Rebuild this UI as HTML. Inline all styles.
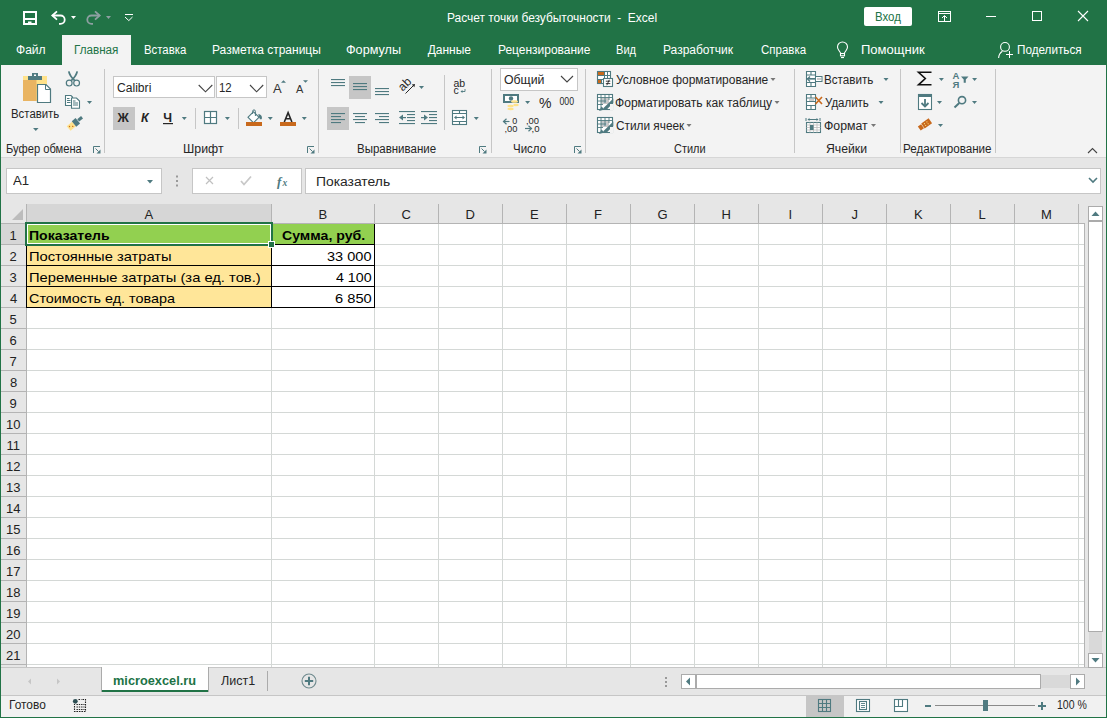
<!DOCTYPE html><html><head><meta charset='utf-8'><style>
html,body{margin:0;padding:0;}
body{width:1107px;height:718px;position:relative;overflow:hidden;background:#e6e6e6;font-family:"Liberation Sans",sans-serif;}
body>div,body>svg{position:absolute;}
.t{white-space:pre;transform-origin:0 0;font-family:"Liberation Sans",sans-serif;}
</style></head><body>
<div style='left:0px;top:0px;width:1107px;height:65px;background:#217346'></div><div style='left:1px;top:65px;width:1105px;height:92px;background:#f3f3f3'></div><div style='left:1px;top:157px;width:1105px;height:1px;background:#d6d6d6'></div><div style='left:1px;top:158px;width:1105px;height:509px;background:#e6e6e6'></div><div style='left:1px;top:667px;width:1105px;height:1px;background:#c6c6c6'></div><div style='left:1px;top:668px;width:1105px;height:27px;background:#e6e6e6'></div><div style='left:1px;top:695px;width:1105px;height:1px;background:#c6c6c6'></div><div style='left:1px;top:696px;width:1105px;height:21px;background:#f1f1f1'></div><div style='left:0px;top:0px;width:1px;height:718px;background:#217346'></div><div style='left:1106px;top:0px;width:1px;height:718px;background:#217346'></div><div style='left:0px;top:717px;width:1107px;height:1px;background:#217346'></div><div style='left:864px;top:7px;width:48px;height:19px;background:#fff;border-radius:2px'></div><div style='left:62px;top:35px;width:69px;height:30px;background:#f3f3f3'></div><div style='left:104px;top:69px;width:1px;height:84px;background:#c6c6c6'></div><div style='left:318px;top:69px;width:1px;height:84px;background:#c6c6c6'></div><div style='left:491px;top:69px;width:1px;height:84px;background:#c6c6c6'></div><div style='left:585px;top:69px;width:1px;height:84px;background:#c6c6c6'></div><div style='left:794px;top:69px;width:1px;height:84px;background:#c6c6c6'></div><div style='left:900px;top:69px;width:1px;height:84px;background:#c6c6c6'></div><div style='left:995px;top:69px;width:1px;height:84px;background:#c6c6c6'></div><div style='left:113px;top:76px;width:102px;height:22px;background:#fff;border:1px solid #c6c6c6;box-sizing:border-box'></div><div style='left:216px;top:76px;width:51px;height:22px;background:#fff;border:1px solid #c6c6c6;box-sizing:border-box'></div><div style='left:113px;top:107px;width:22px;height:23px;background:#c6c6c6'></div><div style='left:349px;top:76px;width:22px;height:23px;background:#c6c6c6'></div><div style='left:327px;top:107px;width:22px;height:23px;background:#c6c6c6'></div><div style='left:444px;top:75px;width:1px;height:55px;background:#c6c6c6'></div><div style='left:195px;top:108px;width:1px;height:21px;background:#c6c6c6'></div><div style='left:238px;top:108px;width:1px;height:21px;background:#c6c6c6'></div><div style='left:500px;top:68px;width:78px;height:23px;background:#fff;border:1px solid #c6c6c6;box-sizing:border-box'></div><div style='left:6px;top:168px;width:156px;height:26px;background:#fff;border:1px solid #c6c6c6;box-sizing:border-box'></div><div style='left:192px;top:168px;width:110px;height:26px;background:#fff;border:1px solid #c6c6c6;box-sizing:border-box'></div><div style='left:305px;top:168px;width:796px;height:26px;background:#fff;border:1px solid #c6c6c6;box-sizing:border-box'></div><div style='left:27px;top:224px;width:1057px;height:443px;background:#fff'></div><div style='left:27px;top:204px;width:244px;height:19px;background:#d6d6d6'></div><div style='left:1px;top:224px;width:25px;height:20px;background:#d6d6d6'></div><div style='left:271px;top:224px;width:1px;height:443px;background:#d4d8d6'></div><div style='left:271px;top:204px;width:1px;height:19px;background:#b4b4b4'></div><div style='left:374px;top:224px;width:1px;height:443px;background:#d4d8d6'></div><div style='left:374px;top:204px;width:1px;height:19px;background:#b4b4b4'></div><div style='left:438px;top:224px;width:1px;height:443px;background:#d4d8d6'></div><div style='left:438px;top:204px;width:1px;height:19px;background:#b4b4b4'></div><div style='left:502px;top:224px;width:1px;height:443px;background:#d4d8d6'></div><div style='left:502px;top:204px;width:1px;height:19px;background:#b4b4b4'></div><div style='left:566px;top:224px;width:1px;height:443px;background:#d4d8d6'></div><div style='left:566px;top:204px;width:1px;height:19px;background:#b4b4b4'></div><div style='left:630px;top:224px;width:1px;height:443px;background:#d4d8d6'></div><div style='left:630px;top:204px;width:1px;height:19px;background:#b4b4b4'></div><div style='left:694px;top:224px;width:1px;height:443px;background:#d4d8d6'></div><div style='left:694px;top:204px;width:1px;height:19px;background:#b4b4b4'></div><div style='left:758px;top:224px;width:1px;height:443px;background:#d4d8d6'></div><div style='left:758px;top:204px;width:1px;height:19px;background:#b4b4b4'></div><div style='left:822px;top:224px;width:1px;height:443px;background:#d4d8d6'></div><div style='left:822px;top:204px;width:1px;height:19px;background:#b4b4b4'></div><div style='left:886px;top:224px;width:1px;height:443px;background:#d4d8d6'></div><div style='left:886px;top:204px;width:1px;height:19px;background:#b4b4b4'></div><div style='left:950px;top:224px;width:1px;height:443px;background:#d4d8d6'></div><div style='left:950px;top:204px;width:1px;height:19px;background:#b4b4b4'></div><div style='left:1014px;top:224px;width:1px;height:443px;background:#d4d8d6'></div><div style='left:1014px;top:204px;width:1px;height:19px;background:#b4b4b4'></div><div style='left:1078px;top:224px;width:1px;height:443px;background:#d4d8d6'></div><div style='left:1078px;top:204px;width:1px;height:19px;background:#b4b4b4'></div><div style='left:26px;top:204px;width:1px;height:463px;background:#b4b4b4'></div><div style='left:1px;top:223px;width:1083px;height:1px;background:#b4b4b4'></div><div style='left:27px;top:244px;width:1057px;height:1px;background:#d4d8d6'></div><div style='left:1px;top:244px;width:25px;height:1px;background:#b4b4b4'></div><div style='left:27px;top:265px;width:1057px;height:1px;background:#d4d8d6'></div><div style='left:1px;top:265px;width:25px;height:1px;background:#b4b4b4'></div><div style='left:27px;top:286px;width:1057px;height:1px;background:#d4d8d6'></div><div style='left:1px;top:286px;width:25px;height:1px;background:#b4b4b4'></div><div style='left:27px;top:307px;width:1057px;height:1px;background:#d4d8d6'></div><div style='left:1px;top:307px;width:25px;height:1px;background:#b4b4b4'></div><div style='left:27px;top:328px;width:1057px;height:1px;background:#d4d8d6'></div><div style='left:1px;top:328px;width:25px;height:1px;background:#b4b4b4'></div><div style='left:27px;top:349px;width:1057px;height:1px;background:#d4d8d6'></div><div style='left:1px;top:349px;width:25px;height:1px;background:#b4b4b4'></div><div style='left:27px;top:370px;width:1057px;height:1px;background:#d4d8d6'></div><div style='left:1px;top:370px;width:25px;height:1px;background:#b4b4b4'></div><div style='left:27px;top:391px;width:1057px;height:1px;background:#d4d8d6'></div><div style='left:1px;top:391px;width:25px;height:1px;background:#b4b4b4'></div><div style='left:27px;top:412px;width:1057px;height:1px;background:#d4d8d6'></div><div style='left:1px;top:412px;width:25px;height:1px;background:#b4b4b4'></div><div style='left:27px;top:433px;width:1057px;height:1px;background:#d4d8d6'></div><div style='left:1px;top:433px;width:25px;height:1px;background:#b4b4b4'></div><div style='left:27px;top:454px;width:1057px;height:1px;background:#d4d8d6'></div><div style='left:1px;top:454px;width:25px;height:1px;background:#b4b4b4'></div><div style='left:27px;top:475px;width:1057px;height:1px;background:#d4d8d6'></div><div style='left:1px;top:475px;width:25px;height:1px;background:#b4b4b4'></div><div style='left:27px;top:496px;width:1057px;height:1px;background:#d4d8d6'></div><div style='left:1px;top:496px;width:25px;height:1px;background:#b4b4b4'></div><div style='left:27px;top:517px;width:1057px;height:1px;background:#d4d8d6'></div><div style='left:1px;top:517px;width:25px;height:1px;background:#b4b4b4'></div><div style='left:27px;top:538px;width:1057px;height:1px;background:#d4d8d6'></div><div style='left:1px;top:538px;width:25px;height:1px;background:#b4b4b4'></div><div style='left:27px;top:559px;width:1057px;height:1px;background:#d4d8d6'></div><div style='left:1px;top:559px;width:25px;height:1px;background:#b4b4b4'></div><div style='left:27px;top:580px;width:1057px;height:1px;background:#d4d8d6'></div><div style='left:1px;top:580px;width:25px;height:1px;background:#b4b4b4'></div><div style='left:27px;top:601px;width:1057px;height:1px;background:#d4d8d6'></div><div style='left:1px;top:601px;width:25px;height:1px;background:#b4b4b4'></div><div style='left:27px;top:622px;width:1057px;height:1px;background:#d4d8d6'></div><div style='left:1px;top:622px;width:25px;height:1px;background:#b4b4b4'></div><div style='left:27px;top:643px;width:1057px;height:1px;background:#d4d8d6'></div><div style='left:1px;top:643px;width:25px;height:1px;background:#b4b4b4'></div><div style='left:27px;top:664px;width:1057px;height:1px;background:#d4d8d6'></div><div style='left:1px;top:664px;width:25px;height:1px;background:#b4b4b4'></div><div style='left:1084px;top:223px;width:1px;height:444px;background:#b4b4b4'></div><div style='left:27px;top:224px;width:244px;height:20px;background:#92d050'></div><div style='left:272px;top:224px;width:102px;height:20px;background:#92d050'></div><div style='left:27px;top:245px;width:244px;height:20px;background:#ffe699'></div><div style='left:27px;top:266px;width:244px;height:20px;background:#ffe699'></div><div style='left:27px;top:287px;width:244px;height:20px;background:#ffe699'></div><div style='left:26px;top:244px;width:349px;height:1px;background:#000'></div><div style='left:26px;top:265px;width:349px;height:1px;background:#000'></div><div style='left:26px;top:286px;width:349px;height:1px;background:#000'></div><div style='left:26px;top:307px;width:349px;height:1px;background:#000'></div><div style='left:26px;top:244px;width:1px;height:64px;background:#000'></div><div style='left:271px;top:224px;width:1px;height:84px;background:#000'></div><div style='left:374px;top:224px;width:1px;height:84px;background:#000'></div><div style='left:25px;top:222px;width:248px;height:24px;border:2px solid #217346;box-sizing:border-box'></div><div style='left:27px;top:224px;width:244px;height:20px;border:1px solid #fff;box-sizing:border-box'></div><div style='left:268px;top:241px;width:7px;height:7px;background:#217346;border:1px solid #fff;box-sizing:border-box'></div><div style='left:1088px;top:206px;width:15px;height:15px;background:#fff;border:1px solid #ababab;box-sizing:border-box'></div><div style='left:1088px;top:221px;width:15px;height:411px;background:#fff;border:1px solid #ababab;box-sizing:border-box'></div><div style='left:1089px;top:632px;width:13px;height:21px;background:#d9d9d9'></div><div style='left:1088px;top:653px;width:15px;height:15px;background:#fff;border:1px solid #ababab;box-sizing:border-box'></div><div style='left:681px;top:674px;width:15px;height:15px;background:#fff;border:1px solid #ababab;box-sizing:border-box'></div><div style='left:696px;top:674px;width:345px;height:15px;background:#fff;border:1px solid #ababab;box-sizing:border-box'></div><div style='left:1041px;top:675px;width:29px;height:13px;background:#d9d9d9'></div><div style='left:1070px;top:674px;width:15px;height:15px;background:#fff;border:1px solid #ababab;box-sizing:border-box'></div><div style='left:101px;top:667px;width:108px;height:25px;background:#fff;border-left:1px solid #ababab;border-right:1px solid #ababab;box-sizing:border-box'></div><div style='left:102px;top:690px;width:106px;height:2px;background:#217346'></div><div style='left:267px;top:671px;width:1px;height:20px;background:#ababab'></div><div style='left:806px;top:696px;width:38px;height:21px;background:#c6c6c6'></div><div style='left:935px;top:705px;width:100px;height:1px;background:#8a8a8a'></div><div style='left:983px;top:700px;width:5px;height:11px;background:#4f7a80'></div><svg style='left:0;top:0' width='1107' height='718' viewBox='0 0 1107 718'><rect x='24' y='12' width='12' height='12' fill='none' stroke='#fff' stroke-width='2'/>
<rect x='23' y='18' width='14' height='2' fill='#fff'/>
<rect x='28' y='21.5' width='3.5' height='3' fill='#fff'/><path d='M52.5 15.5 H60.5 A4.2 4.2 0 0 1 60.5 23.9 H59' fill='none' stroke='#fff' stroke-width='1.8'/>
<polyline points='57,11.3 52.3,15.5 57,19.7' fill='none' stroke='#fff' stroke-width='1.8'/><polygon points='71.0,16 76.0,16 73.5,19' fill='#fff'/><path d='M99.5 15.5 H91.5 A4.2 4.2 0 0 0 91.5 23.9 H93' fill='none' stroke='#8ea0a2' stroke-width='1.8'/>
<polyline points='95,11.3 99.7,15.5 95,19.7' fill='none' stroke='#8ea0a2' stroke-width='1.8'/><polygon points='106.0,16 111.0,16 108.5,19' fill='#8ea0a2'/><rect x='125' y='14' width='8' height='1' fill='#fff'/>
<polyline points='125,17 128.8,20.6 132.5,17' fill='none' stroke='#fff' stroke-width='1'/><rect x='938.5' y='11.5' width='12' height='10' fill='none' stroke='#fff' stroke-width='1'/>
<rect x='938.5' y='13' width='12' height='1' fill='#fff'/>
<polyline points='942,18 944.5,15.5 947,18' fill='none' stroke='#fff' stroke-width='1'/><rect x='944' y='16' width='1' height='5' fill='#fff'/><rect x='986' y='16' width='10' height='1' fill='#fff'/>
<rect x='1032.5' y='11.5' width='9' height='9' fill='none' stroke='#fff' stroke-width='1'/>
<path d='M1078 11 L1088 21 M1088 11 L1078 21' stroke='#fff' stroke-width='1.1'/><path d='M840.6 53 L838.6 50 C837.8 48.8 837.5 47.8 837.5 47 A5 5 0 0 1 847.5 47 C847.5 47.8 847.2 48.8 846.4 50 L844.4 53' fill='none' stroke='#fff' stroke-width='1.1'/>
<rect x='840.5' y='53.5' width='4' height='2.3' fill='none' stroke='#fff' stroke-width='1.1'/>
<rect x='841' y='57' width='3' height='1.1' fill='#fff'/><circle cx='1005' cy='46.9' r='4.4' fill='none' stroke='#fff' stroke-width='1.1'/>
<path d='M998.6 58 C998.8 55.2 1000 52.8 1002.4 51.3' fill='none' stroke='#fff' stroke-width='1.1'/>
<path d='M1009.5 51 V58 M1006 54.5 H1013' stroke='#fff' stroke-width='1'/><rect x='23' y='76' width='24' height='25' fill='#ffe28a'/>
<rect x='23' y='80' width='13.5' height='21' fill='#e9b462'/>
<rect x='28' y='76' width='14' height='4' fill='#4f7a80'/>
<rect x='32' y='73' width='6' height='4' fill='#4f7a80'/><rect x='34' y='74.5' width='2' height='1.5' fill='#fff'/>
<path d='M37.5 84.5 H46 L50.5 89 V102.5 H37.5 Z' fill='#fff' stroke='#4f7a80' stroke-width='1.2'/>
<path d='M45.5 84.5 V89.5 H50.5' fill='none' stroke='#4f7a80' stroke-width='1'/><polygon points='33.05,128 38.55,128 35.8,131' fill='#4f7a80'/><path d='M68.8 71.3 C69.5 75 72 78 74.8 80.6 M77.2 71.3 C76.5 75 74 78 71.2 80.6' fill='none' stroke='#4f7a80' stroke-width='1.8'/>
<circle cx='69.2' cy='83.1' r='2.9' fill='none' stroke='#4f7a80' stroke-width='1.2'/>
<circle cx='76.6' cy='83.1' r='2.9' fill='none' stroke='#4f7a80' stroke-width='1.2'/><path d='M65.5 95.5 H71 L72.5 97 V105.5 H65.5 Z' fill='#fff' stroke='#4f7a80' stroke-width='1.1'/>
<rect x='67' y='98' width='2.5' height='1' fill='#4f7a80'/><rect x='67' y='100' width='3.5' height='1' fill='#4f7a80'/><rect x='67' y='102' width='3.5' height='1' fill='#4f7a80'/>
<path d='M71.5 98 H76.5 L79.5 101 V108.3 H71.5 Z' fill='#fff' stroke='#4f7a80' stroke-width='1.1'/>
<rect x='73' y='100.5' width='2.5' height='1' fill='#4f7a80'/><rect x='73' y='102.5' width='5' height='1' fill='#4f7a80'/><rect x='73' y='104.5' width='5' height='1' fill='#4f7a80'/><polygon points='87.0,101 92.0,101 89.5,104' fill='#4f7a80'/><g transform='rotate(-40 74 124)'>
<rect x='67' y='121' width='7' height='6' fill='#ffe28a'/><circle cx='69' cy='123' r='.7' fill='#c8691c'/><circle cx='71.5' cy='125' r='.7' fill='#c8691c'/>
<rect x='74' y='120.5' width='5' height='7' fill='#4f7a80'/><rect x='79.5' y='122.5' width='5' height='3' fill='#4f7a80'/></g><path d='M93.5 153 V146.5 H100' fill='none' stroke='#4f7a80' stroke-width='1'/>
<path d='M95.5 148.5 L98.5 151.5' stroke='#4f7a80' stroke-width='1'/>
<polygon points='100.5,153.5 100.5,149.5 96.5,153.5' fill='#4f7a80'/><path d='M307.5 153 V146.5 H314' fill='none' stroke='#4f7a80' stroke-width='1'/>
<path d='M309.5 148.5 L312.5 151.5' stroke='#4f7a80' stroke-width='1'/>
<polygon points='314.5,153.5 314.5,149.5 310.5,153.5' fill='#4f7a80'/><path d='M479.5 153 V146.5 H486' fill='none' stroke='#4f7a80' stroke-width='1'/>
<path d='M481.5 148.5 L484.5 151.5' stroke='#4f7a80' stroke-width='1'/>
<polygon points='486.5,153.5 486.5,149.5 482.5,153.5' fill='#4f7a80'/><path d='M574.5 153 V146.5 H581' fill='none' stroke='#4f7a80' stroke-width='1'/>
<path d='M576.5 148.5 L579.5 151.5' stroke='#4f7a80' stroke-width='1'/>
<polygon points='581.5,153.5 581.5,149.5 577.5,153.5' fill='#4f7a80'/><polyline points='198.7,85 205.5,91.8 212.3,85' fill='none' stroke='#444' stroke-width='1.1'/>
<polyline points='250,85 256.6,91.8 263.2,85' fill='none' stroke='#444' stroke-width='1.1'/><text x='273' y='92.6' font-family='Liberation Sans' font-size='13' fill='#333'>A</text>
<polygon points='281,82.8 283.5,80.3 286,82.8' fill='#4f7a80'/>
<text x='296' y='92.6' font-family='Liberation Sans' font-size='11' fill='#333'>A</text>
<polygon points='303,80.3 308,80.3 305.5,82.8' fill='#4f7a80'/><text x='117.5' y='121.8' font-family='Liberation Sans' font-size='12.5' font-weight='bold' fill='#262626'>Ж</text>
<text x='141' y='121.8' font-family='Liberation Sans' font-size='12.5' font-weight='bold' font-style='italic' fill='#262626'>К</text>
<text x='163.3' y='121.8' font-family='Liberation Sans' font-size='12.5' font-weight='bold' fill='#262626'>Ч</text>
<rect x='163' y='123' width='10' height='1.2' fill='#262626'/><polygon points='181.8,117 186.8,117 184.3,120' fill='#4f7a80'/><rect x='204.5' y='111.5' width='12' height='12' fill='#fff' stroke='#4f7a80' stroke-width='1.2'/>
<path d='M210.5 111.5 V123.5 M204.5 117.5 H216.5' stroke='#4f7a80' stroke-width='1.2'/><polygon points='224.9,117 229.9,117 227.4,120' fill='#4f7a80'/><g transform='rotate(45 253.5 117.3)'><rect x='249.6' y='113.4' width='7.8' height='7.8' fill='#fff' stroke='#4f7a80' stroke-width='1.1'/></g>
<path d='M252.6 114 V111.3 A1.4 1.4 0 0 1 255.4 111.3 V116' fill='none' stroke='#4f7a80' stroke-width='1'/>
<path d='M258.3 114 C261.5 114.5 262.5 117 261.6 119.3 L260 119.3 L258.8 116.5 Z' fill='#4f7a80'/>
<rect x='246' y='122' width='16' height='4' fill='#c8691c'/><polygon points='267.8,117 272.8,117 270.3,120' fill='#4f7a80'/><path d='M284.3 122 L288.1 112.6 L291.9 122 M285.6 118.8 H290.6' fill='none' stroke='#262626' stroke-width='1.6'/>
<rect x='280' y='122' width='16' height='4' fill='#c8691c'/><polygon points='301.8,117 306.8,117 304.3,120' fill='#4f7a80'/><rect x='331' y='79' width='14' height='1.1' fill='#4f7a80'/><rect x='331' y='82' width='14' height='1.1' fill='#4f7a80'/><rect x='331' y='85' width='14' height='1.1' fill='#4f7a80'/><rect x='353' y='83' width='14' height='1.1' fill='#4f7a80'/><rect x='353' y='86' width='14' height='1.1' fill='#4f7a80'/><rect x='353' y='89' width='14' height='1.1' fill='#4f7a80'/><rect x='375' y='88' width='14' height='1.1' fill='#4f7a80'/><rect x='375' y='91' width='14' height='1.1' fill='#4f7a80'/><rect x='375' y='94' width='14' height='1.1' fill='#4f7a80'/><rect x='331' y='113' width='14' height='1.1' fill='#4f7a80'/><rect x='331' y='116' width='10' height='1.1' fill='#4f7a80'/><rect x='331' y='119' width='14' height='1.1' fill='#4f7a80'/><rect x='331' y='122' width='10' height='1.1' fill='#4f7a80'/><rect x='353' y='113' width='14' height='1.1' fill='#4f7a80'/><rect x='355' y='116' width='10' height='1.1' fill='#4f7a80'/><rect x='353' y='119' width='14' height='1.1' fill='#4f7a80'/><rect x='355' y='122' width='10' height='1.1' fill='#4f7a80'/><rect x='375' y='113' width='14' height='1.1' fill='#4f7a80'/><rect x='379' y='116' width='10' height='1.1' fill='#4f7a80'/><rect x='375' y='119' width='14' height='1.1' fill='#4f7a80'/><rect x='379' y='122' width='10' height='1.1' fill='#4f7a80'/><rect x='399' y='111' width='16' height='1.1' fill='#4f7a80'/><rect x='407' y='114' width='8' height='1.1' fill='#4f7a80'/><rect x='407' y='117' width='8' height='1.1' fill='#4f7a80'/><rect x='407' y='120' width='8' height='1.1' fill='#4f7a80'/><rect x='399' y='123' width='16' height='1.1' fill='#4f7a80'/><polygon points='399,117.5 403,114.5 403,120.5' fill='#4f7a80'/><rect x='402' y='117' width='4' height='1.2' fill='#4f7a80'/><rect x='421' y='111' width='16' height='1.1' fill='#4f7a80'/><rect x='429' y='114' width='8' height='1.1' fill='#4f7a80'/><rect x='429' y='117' width='8' height='1.1' fill='#4f7a80'/><rect x='429' y='120' width='8' height='1.1' fill='#4f7a80'/><rect x='421' y='123' width='16' height='1.1' fill='#4f7a80'/><polygon points='428,117.5 424,114.5 424,120.5' fill='#4f7a80'/><rect x='421' y='117' width='4' height='1.2' fill='#4f7a80'/><text x='0' y='0' font-family='Liberation Sans' font-size='12' fill='#262626' transform='translate(402.8 91.8) rotate(-45)'>ab</text>
<path d='M405.5 93.5 L413.5 85.5' stroke='#262626' stroke-width='1'/><polygon points='415,84 411.8,84.6 414.4,87.2' fill='#262626'/><polygon points='419.0,86 424.0,86 421.5,89' fill='#4f7a80'/><text x='453.5' y='87' font-family='Liberation Sans' font-size='10.5' fill='#262626'>ab</text>
<text x='453.5' y='94.2' font-family='Liberation Sans' font-size='10.5' fill='#262626'>c</text>
<path d='M465 89 V91.5 H461.5' fill='none' stroke='#4f7a80' stroke-width='.9'/><polygon points='460.5,91.5 462.5,90 462.5,93' fill='#4f7a80'/><rect x='452.5' y='110.5' width='14' height='14' fill='#fff' stroke='#4f7a80' stroke-width='1.1'/>
<path d='M452.5 113.5 H466.5 M452.5 121.5 H466.5 M459.5 110.5 V113.5 M459.5 121.5 V124.5 M455 117.5 H464' stroke='#4f7a80' stroke-width='1.1'/>
<polygon points='454,117.5 456.5,115.5 456.5,119.5' fill='#4f7a80'/><polygon points='465,117.5 462.5,115.5 462.5,119.5' fill='#4f7a80'/><polygon points='473.8,117 478.8,117 476.3,120' fill='#4f7a80'/><polyline points='561,76 567,82 573,76' fill='none' stroke='#444' stroke-width='1.1'/><rect x='503' y='94' width='16' height='9' fill='#4f7a80'/><rect x='505' y='96' width='12' height='5' fill='#fff'/>
<circle cx='511' cy='98.5' r='2.2' fill='#4f7a80'/>
<ellipse cx='514.5' cy='101.5' rx='3.5' ry='1.3' fill='#ffe28a'/><ellipse cx='516' cy='105' rx='2.8' ry='1.2' fill='#ffe28a'/>
<ellipse cx='510.5' cy='106' rx='3.2' ry='1.3' fill='#ffe28a'/><ellipse cx='510.5' cy='109' rx='3.2' ry='1.2' fill='#ffe28a'/><polygon points='525.1,101 530.1,101 527.6,104' fill='#4f7a80'/><text x='539' y='107.6' font-family='Liberation Sans' font-size='14' fill='#262626'>%</text>
<text x='559.5' y='105.2' font-family='Liberation Sans' font-size='10' fill='#262626' textLength='14.5' lengthAdjust='spacingAndGlyphs'>000</text><path d='M503.5 121.5 H509.5' stroke='#4f7a80' stroke-width='1.2'/><polyline points='506.5,118.8 503.5,121.5 506.5,124.2' fill='none' stroke='#4f7a80' stroke-width='1.2'/>
<text x='512.3' y='124.2' font-family='Liberation Sans' font-size='9' fill='#262626' textLength='5' lengthAdjust='spacingAndGlyphs'>0</text>
<text x='504.5' y='132.2' font-family='Liberation Sans' font-size='9' fill='#262626' textLength='13' lengthAdjust='spacingAndGlyphs'>,00</text>
<text x='526' y='124.2' font-family='Liberation Sans' font-size='9' fill='#262626' textLength='13' lengthAdjust='spacingAndGlyphs'>,00</text>
<path d='M525 128.5 H531.5' stroke='#4f7a80' stroke-width='1.2'/><polyline points='528.5,125.8 531.5,128.5 528.5,131.2' fill='none' stroke='#4f7a80' stroke-width='1.2'/>
<text x='531.5' y='132.2' font-family='Liberation Sans' font-size='9' fill='#262626' textLength='8' lengthAdjust='spacingAndGlyphs'>,0</text><rect x='597.5' y='71.5' width='13' height='12' fill='#fff' stroke='#4f7a80' stroke-width='1.1'/>
<rect x='598' y='72' width='6.5' height='3.5' fill='#c8691c'/><rect x='598' y='80' width='3.5' height='3' fill='#c8691c'/>
<path d='M597.5 75.5 H610.5 M597.5 79.5 H603 M601.5 79.5 V83.5 M604.5 71.5 V78 M607.5 71.5 V78' stroke='#4f7a80' stroke-width='1'/>
<rect x='603.5' y='78.5' width='9' height='8' fill='#fff' stroke='#4f7a80' stroke-width='1.1'/>
<path d='M605.8 81.2 H610.3 M605.8 83.6 H610.3 M609.3 79.8 L606.8 85.2' stroke='#262626' stroke-width='.9'/><rect x='597.5' y='94.5' width='15' height='15' fill='#fff' stroke='#4f7a80' stroke-width='1.1'/>
<rect x='601' y='98' width='8' height='6' fill='#c8c8c8'/>
<circle cx='603' cy='100' r='.6' fill='#9cd0e8'/><circle cx='606' cy='101' r='.6' fill='#9cd0e8'/><circle cx='604' cy='102.5' r='.6' fill='#9cd0e8'/>
<path d='M597.5 97.5 H612.5 M597.5 101 H606 M597.5 104.5 H603 M601 94.5 V109.5 M605 94.5 V103 M609 94.5 V100' stroke='#4f7a80' stroke-width='.9'/>
<polygon points='613.3,98.5 613.3,103 606.5,109.8 603.5,109.8 603.5,108' fill='#4f7a80'/>
<polygon points='601.5,106.5 604.5,109.5 599,111' fill='#4f7a80'/>
<rect x='610' y='104' width='3' height='6' fill='#f3f3f3'/><rect x='597.5' y='117.5' width='15' height='15' fill='#fff' stroke='#4f7a80' stroke-width='1.1'/>
<rect x='601' y='121' width='8' height='6' fill='#c8c8c8'/>
<circle cx='603' cy='123' r='.6' fill='#9cd0e8'/><circle cx='606' cy='124' r='.6' fill='#9cd0e8'/><circle cx='604' cy='125.5' r='.6' fill='#9cd0e8'/>
<path d='M597.5 120.5 H612.5 M597.5 124 H606 M597.5 127.5 H603 M601 117.5 V132.5 M605 117.5 V126 M609 117.5 V123' stroke='#4f7a80' stroke-width='.9'/>
<polygon points='613.3,121.5 613.3,126 606.5,132.8 603.5,132.8 603.5,131' fill='#4f7a80'/>
<polygon points='601.5,129.5 604.5,132.5 599,134' fill='#4f7a80'/>
<rect x='610' y='127' width='3' height='6' fill='#f3f3f3'/><polygon points='774.5,101 779.5,101 777,104' fill='#777'/><polygon points='686.5,124 691.5,124 689,127' fill='#777'/><polygon points='770.5,78 775.5,78 773,81' fill='#777'/><path d='M806.5 71.5 H815.5 V86.5 H806.5 Z M806.5 75 H815.5 M806.5 78.5 H815.5 M806.5 82.5 H815.5 M811 82.5 V86.5 M811 71.5 V75' fill='#fff' stroke='#4f7a80' stroke-width='1.1'/>
<rect x='815.5' y='76.5' width='6.5' height='5' fill='#fff' stroke='#4f7a80' stroke-width='1'/><rect x='817' y='78' width='4' height='2' fill='#ccc'/>
<path d='M808 79 H815' stroke='#4f7a80' stroke-width='1.3'/><polyline points='810,76.5 807.5,79 810,81.5' fill='none' stroke='#4f7a80' stroke-width='1.3'/><polygon points='883.5,78 888.5,78 886,81' fill='#4f7a80'/><path d='M806.5 94.5 H815.5 V109.5 H806.5 Z M806.5 98 H815.5 M806.5 101.5 H815.5 M806.5 105.5 H815.5 M811 105.5 V109.5 M811 94.5 V98' fill='#fff' stroke='#4f7a80' stroke-width='1.1'/>
<rect x='809' y='99' width='5' height='2' fill='#ccc'/>
<path d='M815.5 97 L822 104 M822 97 L815.5 104' stroke='#c8691c' stroke-width='1.6'/><polygon points='878.5,101 883.5,101 881,104' fill='#4f7a80'/><path d='M806 118 V121 M820 118 V121 M808 119.5 H818' stroke='#4f7a80' stroke-width='1'/>
<polygon points='807.5,119.5 809.5,118 809.5,121' fill='#4f7a80'/><polygon points='818.5,119.5 816.5,118 816.5,121' fill='#4f7a80'/>
<rect x='806.5' y='122.5' width='14' height='10' fill='#fff' stroke='#4f7a80' stroke-width='1.1'/>
<path d='M806.5 125 H820.5 M806.5 127.5 H820.5 M806.5 130 H820.5 M810 122.5 V132.5 M813.5 122.5 V132.5 M817 122.5 V132.5' stroke='#bbb' stroke-width='.8'/>
<rect x='810' y='125' width='3.5' height='5' fill='#4f7a80'/><polygon points='871.0,124 876.0,124 873.5,127' fill='#777'/><path d='M931.5 72.3 H918.5 L925.3 78.5 L918.5 84.8 H931.5' fill='none' stroke='#111' stroke-width='1.6' stroke-linejoin='miter'/><polygon points='938.9,78 943.9,78 941.4,81' fill='#4f7a80'/><text x='952.5' y='78.5' font-family='Liberation Sans' font-size='9.5' font-weight='bold' fill='#4f7a80'>А</text>
<text x='952.5' y='87.5' font-family='Liberation Sans' font-size='9.5' font-weight='bold' fill='#4f7a80'>Я</text>
<path d='M961 76.5 H968.5 L965.8 79.5 V82.8 H963.7 V79.5 Z' fill='#4f7a80'/><polygon points='972.1,78 977.1,78 974.6,81' fill='#4f7a80'/><rect x='918.5' y='94.5' width='13' height='15' fill='#fff' stroke='#4f7a80' stroke-width='1.1'/>
<rect x='918' y='94' width='14' height='3' fill='#4f7a80'/>
<path d='M925 99 V106' stroke='#4f7a80' stroke-width='1.8'/><polyline points='921.5,103 925,106.5 928.5,103' fill='none' stroke='#4f7a80' stroke-width='1.8'/><polygon points='937.0,101 942.0,101 939.5,104' fill='#4f7a80'/><circle cx='962' cy='100.2' r='3.6' fill='none' stroke='#4f7a80' stroke-width='1.6'/>
<path d='M959.3 103 L954.5 107.5' stroke='#4f7a80' stroke-width='2'/><polygon points='972.0,101 977.0,101 974.5,104' fill='#4f7a80'/><g transform='rotate(-35 925 124.5)'><rect x='918' y='122' width='4' height='5' fill='#c8691c'/><rect x='922.5' y='121.5' width='9' height='6' fill='#c8691c'/>
<circle cx='925' cy='123.5' r='.6' fill='#ffe28a'/><circle cx='928' cy='123.5' r='.6' fill='#ffe28a'/><circle cx='925' cy='125.7' r='.6' fill='#ffe28a'/><circle cx='928' cy='125.7' r='.6' fill='#ffe28a'/></g><polygon points='938.0,124 943.0,124 940.5,127' fill='#4f7a80'/><polyline points='1088,153 1092.5,148.5 1097,153' fill='none' stroke='#444' stroke-width='1.1'/><polygon points='147.0,180 153.0,180 150,183.5' fill='#4f7a80'/>
<rect x='176' y='175.5' width='2' height='2' fill='#999'/><rect x='176' y='180' width='2' height='2' fill='#999'/><rect x='176' y='184.5' width='2' height='2' fill='#999'/>
<path d='M206 177 L213 184 M213 177 L206 184' stroke='#c0c0c0' stroke-width='1.2'/>
<polyline points='241,181 244,184.5 251,176.5' fill='none' stroke='#c8c8c8' stroke-width='1.8'/>
<text x='277' y='185.5' font-family='Liberation Serif' font-style='italic' font-weight='bold' font-size='13' fill='#4f7a80'>f</text>
<text x='282.5' y='185.5' font-family='Liberation Serif' font-style='italic' font-weight='bold' font-size='9.5' fill='#4f7a80'>x</text>
<polyline points='1089,178 1093,182 1097,178' fill='none' stroke='#4f7a80' stroke-width='1.6'/><polygon points='23,209 23,220 12,220' fill='#bcbcbc'/><polygon points='1091.5,216 1095.5,211.5 1099.5,216' fill='#4f7a80'/>
<polygon points='1091.5,658 1099.5,658 1095.5,662.5' fill='#4f7a80'/>
<polygon points='686,681.5 690,677.5 690,685.5' fill='#4f7a80'/>
<polygon points='1080,681.5 1076,677.5 1076,685.5' fill='#4f7a80'/>
<rect x='665' y='677' width='2' height='2' fill='#999'/><rect x='665' y='681' width='2' height='2' fill='#999'/><rect x='665' y='685' width='2' height='2' fill='#999'/><polygon points='28,681.5 31,678.5 31,684.5' fill='#c6c6c6'/><polygon points='60,681.5 57,678.5 57,684.5' fill='#c6c6c6'/><circle cx='309' cy='681' r='7' fill='none' stroke='#6f8a8e' stroke-width='1.1'/>
<path d='M309 676.8 V685.2 M304.8 681 H313.2' stroke='#4f7a80' stroke-width='2'/><circle cx='75.3' cy='701.3' r='2.4' fill='#2e4f54'/>
<path d='M78.5 699.5 H81.5 M82.5 699.5 H85.5 V711.5 H74.5 V704' fill='none' stroke='#222' stroke-width='1.1' stroke-dasharray='1.6 .9'/>
<path d='M76.5 704.5 H84.5 M76.5 707 H84.5 M76.5 709.5 H84.5' stroke='#222' stroke-width='1' stroke-dasharray='1.4 .9'/><rect x='818.5' y='699.5' width='12' height='12' fill='none' stroke='#4f7a80' stroke-width='1.1'/>
<path d='M822.5 699.5 V711.5 M826.5 699.5 V711.5 M818.5 703.5 H830.5 M818.5 707.5 H830.5' stroke='#4f7a80' stroke-width='1.1'/>
<rect x='856.5' y='699.5' width='13' height='12' fill='#fff' stroke='#4f7a80' stroke-width='1.1'/>
<rect x='859.5' y='701.5' width='7' height='8' fill='#fff' stroke='#4f7a80' stroke-width='1.1'/>
<path d='M861 703.5 H865 M861 705.5 H865 M861 707.5 H865' stroke='#4f7a80' stroke-width='.9'/>
<rect x='894.5' y='699.5' width='13' height='12' fill='#fff' stroke='#4f7a80' stroke-width='1.1'/>
<path d='M898.5 699.5 V706 M902.5 699.5 V706.5 H894.5' fill='none' stroke='#4f7a80' stroke-width='1.1'/>
<rect x='925' y='705' width='6' height='2' fill='#4f7a80'/>
<path d='M1038 706 H1046 M1042 702 V710' stroke='#4f7a80' stroke-width='2'/></svg><div class='t' style='left:446.61px;top:12.00px;font-size:12px;line-height:12px;font-weight:400;color:#fff;transform:scaleX(0.9948);'>Расчет точки безубыточности  -  Excel</div><div class='t' style='left:874.85px;top:11.00px;font-size:12px;line-height:12px;font-weight:400;color:#217346;transform:scaleX(0.9538);'>Вход</div><div class='t' style='left:15.50px;top:44.00px;font-size:12px;line-height:12px;font-weight:400;color:#fff;transform:scaleX(1.0036);'>Файл</div><div class='t' style='left:73.73px;top:44.00px;font-size:12px;line-height:12px;font-weight:400;color:#217346;transform:scaleX(0.9727);'>Главная</div><div class='t' style='left:144.05px;top:44.00px;font-size:12px;line-height:12px;font-weight:400;color:#fff;transform:scaleX(0.9477);'>Вставка</div><div class='t' style='left:212.00px;top:44.00px;font-size:12px;line-height:12px;font-weight:400;color:#fff;transform:scaleX(1.0000);'>Разметка страницы</div><div class='t' style='left:345.95px;top:44.00px;font-size:12px;line-height:12px;font-weight:400;color:#fff;transform:scaleX(1.0529);'>Формулы</div><div class='t' style='left:427.70px;top:44.00px;font-size:12px;line-height:12px;font-weight:400;color:#fff;transform:scaleX(1.0000);'>Данные</div><div class='t' style='left:498.30px;top:44.00px;font-size:12px;line-height:12px;font-weight:400;color:#fff;transform:scaleX(0.9967);'>Рецензирование</div><div class='t' style='left:616.38px;top:44.00px;font-size:12px;line-height:12px;font-weight:400;color:#fff;transform:scaleX(0.9238);'>Вид</div><div class='t' style='left:663.00px;top:44.00px;font-size:12px;line-height:12px;font-weight:400;color:#fff;transform:scaleX(1.0000);'>Разработчик</div><div class='t' style='left:760.70px;top:44.00px;font-size:12px;line-height:12px;font-weight:400;color:#fff;transform:scaleX(0.9574);'>Справка</div><div class='t' style='left:860.91px;top:44.00px;font-size:12px;line-height:12px;font-weight:400;color:#fff;transform:scaleX(1.0862);'>Помощник</div><div class='t' style='left:1016.62px;top:44.00px;font-size:12px;line-height:12px;font-weight:400;color:#fff;transform:scaleX(0.9754);'>Поделиться</div><div class='t' style='left:5.77px;top:143.00px;font-size:12px;line-height:12px;font-weight:400;color:#262626;transform:scaleX(0.9296);'>Буфер обмена</div><div class='t' style='left:182.97px;top:143.00px;font-size:12px;line-height:12px;font-weight:400;color:#262626;transform:scaleX(1.0263);'>Шрифт</div><div class='t' style='left:356.54px;top:143.00px;font-size:12px;line-height:12px;font-weight:400;color:#262626;transform:scaleX(0.9568);'>Выравнивание</div><div class='t' style='left:513.04px;top:143.00px;font-size:12px;line-height:12px;font-weight:400;color:#262626;transform:scaleX(0.9576);'>Число</div><div class='t' style='left:674.00px;top:143.00px;font-size:12px;line-height:12px;font-weight:400;color:#262626;transform:scaleX(0.9118);'>Стили</div><div class='t' style='left:825.98px;top:143.00px;font-size:12px;line-height:12px;font-weight:400;color:#262626;transform:scaleX(1.0205);'>Ячейки</div><div class='t' style='left:902.83px;top:143.00px;font-size:12px;line-height:12px;font-weight:400;color:#262626;transform:scaleX(0.9689);'>Редактирование</div><div class='t' style='left:10.85px;top:108.00px;font-size:12px;line-height:12px;font-weight:400;color:#262626;transform:scaleX(0.9490);'>Вставить</div><div class='t' style='left:116.60px;top:82.00px;font-size:12px;line-height:12px;font-weight:400;color:#262626;transform:scaleX(1.0091);'>Calibri</div><div class='t' style='left:218.55px;top:82.00px;font-size:12px;line-height:12px;font-weight:400;color:#262626;transform:scaleX(0.9500);'>12</div><div class='t' style='left:503.50px;top:74.00px;font-size:12px;line-height:12px;font-weight:400;color:#262626;transform:scaleX(1.0256);'>Общий</div><div class='t' style='left:616.00px;top:74.00px;font-size:12px;line-height:12px;font-weight:400;color:#262626;transform:scaleX(0.9974);'>Условное форматирование</div><div class='t' style='left:614.99px;top:97.00px;font-size:12px;line-height:12px;font-weight:400;color:#262626;transform:scaleX(1.0065);'>Форматировать как таблицу</div><div class='t' style='left:616.00px;top:120.00px;font-size:12px;line-height:12px;font-weight:400;color:#262626;transform:scaleX(0.9855);'>Стили ячеек</div><div class='t' style='left:824.03px;top:74.00px;font-size:12px;line-height:12px;font-weight:400;color:#262626;transform:scaleX(0.9694);'>Вставить</div><div class='t' style='left:825.00px;top:97.00px;font-size:12px;line-height:12px;font-weight:400;color:#262626;transform:scaleX(0.9556);'>Удалить</div><div class='t' style='left:823.98px;top:120.00px;font-size:12px;line-height:12px;font-weight:400;color:#262626;transform:scaleX(1.0238);'>Формат</div><div class='t' style='left:13.30px;top:175.00px;font-size:12px;line-height:12px;font-weight:400;color:#262626;transform:scaleX(1.1000);'>A1</div><div class='t' style='left:315.64px;top:176.00px;font-size:12px;line-height:12px;font-weight:400;color:#262626;transform:scaleX(1.1556);'>Показатель</div><div class='t' style='left:144.50px;top:208.00px;font-size:13px;line-height:13px;font-weight:400;color:#222;transform:scaleX(1.0000);'>A</div><div class='t' style='left:318.50px;top:208.00px;font-size:13px;line-height:13px;font-weight:400;color:#222;transform:scaleX(1.0000);'>B</div><div class='t' style='left:401.50px;top:208.00px;font-size:13px;line-height:13px;font-weight:400;color:#222;transform:scaleX(1.0000);'>C</div><div class='t' style='left:465.50px;top:208.00px;font-size:13px;line-height:13px;font-weight:400;color:#222;transform:scaleX(1.0000);'>D</div><div class='t' style='left:530.00px;top:208.00px;font-size:13px;line-height:13px;font-weight:400;color:#222;transform:scaleX(1.0000);'>E</div><div class='t' style='left:594.00px;top:208.00px;font-size:13px;line-height:13px;font-weight:400;color:#222;transform:scaleX(1.0000);'>F</div><div class='t' style='left:657.50px;top:208.00px;font-size:13px;line-height:13px;font-weight:400;color:#222;transform:scaleX(1.0000);'>G</div><div class='t' style='left:721.50px;top:208.00px;font-size:13px;line-height:13px;font-weight:400;color:#222;transform:scaleX(1.0000);'>H</div><div class='t' style='left:788.50px;top:208.00px;font-size:13px;line-height:13px;font-weight:400;color:#222;transform:scaleX(1.0000);'>I</div><div class='t' style='left:851.50px;top:208.00px;font-size:13px;line-height:13px;font-weight:400;color:#222;transform:scaleX(1.0000);'>J</div><div class='t' style='left:914.00px;top:208.00px;font-size:13px;line-height:13px;font-weight:400;color:#222;transform:scaleX(1.0000);'>K</div><div class='t' style='left:978.50px;top:208.00px;font-size:13px;line-height:13px;font-weight:400;color:#222;transform:scaleX(1.0000);'>L</div><div class='t' style='left:1041.00px;top:208.00px;font-size:13px;line-height:13px;font-weight:400;color:#222;transform:scaleX(1.0000);'>M</div><div class='t' style='left:9.50px;top:229.00px;font-size:13px;line-height:13px;font-weight:400;color:#222;transform:scaleX(1.0000);'>1</div><div class='t' style='left:9.50px;top:250.00px;font-size:13px;line-height:13px;font-weight:400;color:#222;transform:scaleX(1.0000);'>2</div><div class='t' style='left:9.50px;top:271.00px;font-size:13px;line-height:13px;font-weight:400;color:#222;transform:scaleX(1.0000);'>3</div><div class='t' style='left:10.00px;top:292.00px;font-size:13px;line-height:13px;font-weight:400;color:#222;transform:scaleX(1.0000);'>4</div><div class='t' style='left:9.50px;top:313.00px;font-size:13px;line-height:13px;font-weight:400;color:#222;transform:scaleX(1.0000);'>5</div><div class='t' style='left:9.50px;top:334.00px;font-size:13px;line-height:13px;font-weight:400;color:#222;transform:scaleX(1.0000);'>6</div><div class='t' style='left:9.50px;top:355.00px;font-size:13px;line-height:13px;font-weight:400;color:#222;transform:scaleX(1.0000);'>7</div><div class='t' style='left:10.00px;top:376.00px;font-size:13px;line-height:13px;font-weight:400;color:#222;transform:scaleX(1.0000);'>8</div><div class='t' style='left:9.50px;top:397.00px;font-size:13px;line-height:13px;font-weight:400;color:#222;transform:scaleX(1.0000);'>9</div><div class='t' style='left:6.00px;top:418.00px;font-size:13px;line-height:13px;font-weight:400;color:#222;transform:scaleX(1.0000);'>10</div><div class='t' style='left:6.50px;top:439.00px;font-size:13px;line-height:13px;font-weight:400;color:#222;transform:scaleX(1.0000);'>11</div><div class='t' style='left:6.00px;top:460.00px;font-size:13px;line-height:13px;font-weight:400;color:#222;transform:scaleX(1.0000);'>12</div><div class='t' style='left:6.00px;top:481.00px;font-size:13px;line-height:13px;font-weight:400;color:#222;transform:scaleX(1.0000);'>13</div><div class='t' style='left:6.00px;top:502.00px;font-size:13px;line-height:13px;font-weight:400;color:#222;transform:scaleX(1.0000);'>14</div><div class='t' style='left:6.00px;top:523.00px;font-size:13px;line-height:13px;font-weight:400;color:#222;transform:scaleX(1.0000);'>15</div><div class='t' style='left:6.00px;top:544.00px;font-size:13px;line-height:13px;font-weight:400;color:#222;transform:scaleX(1.0000);'>16</div><div class='t' style='left:6.00px;top:565.00px;font-size:13px;line-height:13px;font-weight:400;color:#222;transform:scaleX(1.0000);'>17</div><div class='t' style='left:6.00px;top:586.00px;font-size:13px;line-height:13px;font-weight:400;color:#222;transform:scaleX(1.0000);'>18</div><div class='t' style='left:6.00px;top:607.00px;font-size:13px;line-height:13px;font-weight:400;color:#222;transform:scaleX(1.0000);'>19</div><div class='t' style='left:6.00px;top:628.00px;font-size:13px;line-height:13px;font-weight:400;color:#222;transform:scaleX(1.0000);'>20</div><div class='t' style='left:6.00px;top:649.00px;font-size:13px;line-height:13px;font-weight:400;color:#222;transform:scaleX(1.0000);'>21</div><div class='t' style='left:28.82px;top:229.00px;font-size:13px;line-height:13px;font-weight:700;color:#000;transform:scaleX(1.0808);'>Показатель</div><div class='t' style='left:281.50px;top:229.00px;font-size:13px;line-height:13px;font-weight:700;color:#000;transform:scaleX(1.0855);'>Сумма, руб.</div><div class='t' style='left:28.87px;top:250.00px;font-size:13px;line-height:13px;font-weight:400;color:#000;transform:scaleX(1.1315);'>Постоянные затраты</div><div class='t' style='left:28.87px;top:271.00px;font-size:13px;line-height:13px;font-weight:400;color:#000;transform:scaleX(1.1330);'>Переменные затраты (за ед. тов.)</div><div class='t' style='left:28.89px;top:292.00px;font-size:13px;line-height:13px;font-weight:400;color:#000;transform:scaleX(1.1069);'>Стоимость ед. товара</div><div class='t' style='left:327.38px;top:250.00px;font-size:13px;line-height:13px;font-weight:400;color:#000;transform:scaleX(1.1184);'>33 000</div><div class='t' style='left:336.00px;top:271.00px;font-size:13px;line-height:13px;font-weight:400;color:#000;transform:scaleX(1.0938);'>4 100</div><div class='t' style='left:334.87px;top:292.00px;font-size:13px;line-height:13px;font-weight:400;color:#000;transform:scaleX(1.1290);'>6 850</div><div class='t' style='left:112.52px;top:674.00px;font-size:13px;line-height:13px;font-weight:700;color:#217346;transform:scaleX(0.9819);'>microexcel.ru</div><div class='t' style='left:220.50px;top:674.00px;font-size:13px;line-height:13px;font-weight:400;color:#262626;transform:scaleX(0.9657);'>Лист1</div><div class='t' style='left:8.51px;top:699.00px;font-size:12px;line-height:12px;font-weight:400;color:#262626;transform:scaleX(0.9917);'>Готово</div><div class='t' style='left:1056.92px;top:699.00px;font-size:12px;line-height:12px;font-weight:400;color:#262626;transform:scaleX(0.8758);'>100 %</div>
</body></html>
